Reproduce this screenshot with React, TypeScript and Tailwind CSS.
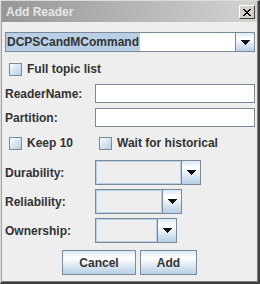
import React from "react";

const font = "font-['Liberation_Sans',Arial,sans-serif] font-bold text-[12px] text-[#333333]";

function Arrow() {
  return (
    <svg width="9" height="5" viewBox="0 0 9 5" shapeRendering="crispEdges">
      <rect x="0" y="0" width="9" height="1" fill="#111" />
      <rect x="1" y="1" width="7" height="1" fill="#111" />
      <rect x="2" y="2" width="5" height="1" fill="#111" />
      <rect x="3" y="3" width="3" height="1" fill="#111" />
      <rect x="4" y="4" width="1" height="1" fill="#111" />
    </svg>
  );
}

function ArrowButton() {
  return (
    <div className="w-[19px] h-full flex items-center justify-center border-l border-[#7a8a99] bg-[linear-gradient(#dde8f3,#ffffff_30%,#b8cfe5)]">
      <Arrow />
    </div>
  );
}

function Combo({ width }: { width: string }) {
  return (
    <div className={`${width} h-[25px] flex border border-[#7a8a99] bg-[#eeeeee]`}>
      <div className="flex-1 border border-[#b8cfe5]" />
      <ArrowButton />
    </div>
  );
}

function Check({ label }: { label: string }) {
  return (
    <div className="flex items-center gap-[5px]">
      <div className="w-[13px] h-[13px] border border-[#7a8a99] bg-[linear-gradient(135deg,#ffffff,#dde8f3_40%,#b8cfe5)]" />
      <span className={`${font} leading-[13px]`}>{label}</span>
    </div>
  );
}

function Field() {
  return <div className="w-[160px] h-[19px] border border-[#7a8a99] bg-white" />;
}

function Btn({ label, width }: { label: string; width: string }) {
  return (
    <div
      className={`${width} h-[25px] flex items-center justify-center border border-[#7a8a99] bg-[linear-gradient(#dde8f3,#ffffff_30%,#b8cfe5)] ${font}`}
    >
      {label}
    </div>
  );
}

export default function App() {
  return (
    <div className="w-[260px] h-[284px] flex flex-col border-t border-l border-t-[#dcdcdc] border-l-[#dcdcdc] border-r-2 border-b-2 border-r-[#404040] border-b-[#404040]">
      <div className="flex-1 flex flex-col border-l border-r border-b border-l-[#a0a0a0] border-r-[#808080] border-b-[#808080] bg-[#eeeeee]">
        {/* title bar */}
        <div className="h-[21px] flex items-center justify-between pl-[4px] pr-[2px] bg-linear-to-r from-[#979797] to-[#d3d3d3]">
          <span className="font-['Liberation_Sans',Arial,sans-serif] font-bold text-[12px] text-[#e6e6e6]">Add Reader</span>
          <div className="w-[16px] h-[14px] mt-[1px] flex items-center justify-center bg-[#d4d0c8] border border-t-white border-l-white border-r-[#404040] border-b-[#404040]">
            <svg width="8" height="7" viewBox="0 0 8 7" shapeRendering="crispEdges">
              <path d="M0 0h2l2 2.5L6 0h2L5 3.5 8 7H6L4 4.5 2 7H0l3-3.5z" fill="#000" />
            </svg>
          </div>
        </div>

        <div className="flex flex-col pl-[3px]">
          {/* topic combo */}
          <div className="mt-[10px] w-[250px] h-[20px] flex border border-[#7a8a99] bg-white">
            <div className="flex-1 flex items-stretch">
              <span className={`${font} bg-[#b8cfe5] px-[1px] flex items-center`}>DCPSCandMCommand</span>
            </div>
            <ArrowButton />
          </div>

          <div className="mt-[11px] pl-[4px]">
            <Check label="Full topic list" />
          </div>

          <div className="mt-[8px] flex items-center">
            <span className={`${font} w-[90px]`}>ReaderName:</span>
            <Field />
          </div>
          <div className="mt-[5px] flex items-center">
            <span className={`${font} w-[90px]`}>Partition:</span>
            <Field />
          </div>

          <div className="mt-[10px] pl-[4px] flex gap-[26px]">
            <Check label="Keep 10" />
            <Check label="Wait for historical" />
          </div>

          <div className="mt-[10px] flex items-center">
            <span className={`${font} w-[90px]`}>Durability:</span>
            <Combo width="w-[106px]" />
          </div>
          <div className="mt-[4px] flex items-center">
            <span className={`${font} w-[90px]`}>Reliability:</span>
            <Combo width="w-[87px]" />
          </div>
          <div className="mt-[4px] flex items-center">
            <span className={`${font} w-[90px]`}>Ownership:</span>
            <Combo width="w-[82px]" />
          </div>

          <div className="mt-[7px] flex justify-center gap-[4px] pr-[3px]">
            <Btn label="Cancel" width="w-[74px]" />
            <Btn label="Add" width="w-[57px]" />
          </div>
        </div>
      </div>
    </div>
  );
}
